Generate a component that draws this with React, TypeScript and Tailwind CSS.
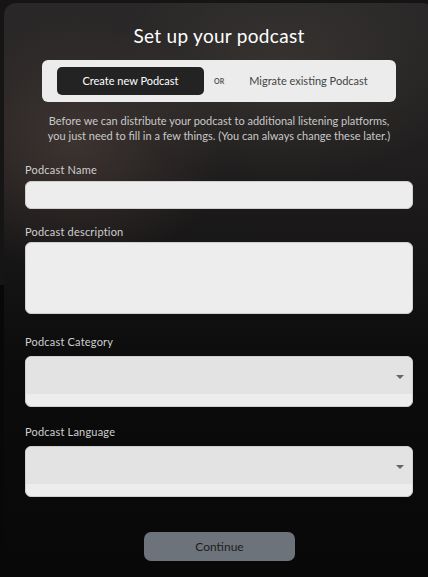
import React from "react";

const font = { fontFamily: "Lato, 'Noto Sans', sans-serif" };

function Label({ children, className }: { children: React.ReactNode; className?: string }) {
  return <p className={`text-[11px] leading-[14px] text-[#cfcfcf] tracking-[0.2px] ${className ?? ""}`}>{children}</p>;
}

function SelectBox({ className }: { className?: string }) {
  return (
    <div className={`relative h-[51px] rounded-[6px] border border-[#cfcfcf] bg-[#ededed] overflow-hidden ${className ?? ""}`}>
      <div className="h-[37px] bg-[#e3e3e3] flex items-center justify-end pr-[8px]">
        <svg width="8" height="5" viewBox="0 0 8 5" className="mt-[4px]">
          <path d="M0 0h8L4 4z" fill="#666" />
        </svg>
      </div>
    </div>
  );
}

export default function App() {
  return (
    <div
      style={font}
      className="w-[428px] h-[577px] overflow-hidden bg-[linear-gradient(to_bottom,#151515_0,#151515_285px,#080808_285px)]"
    >
      <div className="ml-1 mt-[3px] w-[430px] h-[569px] rounded-[12px] px-[21px] bg-[radial-gradient(ellipse_150px_130px_at_70px_140px,rgba(125,100,90,0.3),transparent),radial-gradient(ellipse_180px_110px_at_280px_70px,rgba(115,108,95,0.22),transparent),linear-gradient(to_bottom,#2a2828_0,#1e1c1c_180px,#0c0c0c_360px,#080808_100%)]">
        <h1 className="pt-[21px] text-center text-[19px] leading-[24px] text-white tracking-[0.3px]">
          Set up your podcast
        </h1>
        <div className="mx-[17px] mt-[12px] h-[42px] rounded-[6px] bg-[#ececec] flex items-center px-[15px]">
          <div className="w-[147px] h-[28px] rounded-[5px] bg-[#232323] flex items-center justify-center text-[11px] text-white">
            Create new Podcast
          </div>
          <span className="ml-[10px] text-[7px] text-[#555] font-bold">OR</span>
          <span className="ml-[25px] text-[11px] text-[#444]">Migrate existing Podcast</span>
        </div>
        <p className="mt-[11px] text-center text-[11px] leading-[15px] text-[#c9c9c9]">
          Before we can distribute your podcast to additional listening platforms,
          <br />
          you just need to fill in a few things. (You can always change these later.)
        </p>

        <Label className="mt-[20px]">Podcast Name</Label>
        <div className="mt-[4px] h-[28px] rounded-[6px] border border-[#cfcfcf] bg-[#ededed]" />

        <Label className="mt-[16px]">Podcast description</Label>
        <div className="mt-[3px] h-[72px] rounded-[6px] border border-[#cfcfcf] bg-[#ededed]" />

        <Label className="mt-[21px]">Podcast Category</Label>
        <SelectBox className="mt-[7px]" />

        <Label className="mt-[18px]">Podcast Language</Label>
        <SelectBox className="mt-[7px]" />

        <div className="mt-[35px] flex justify-center">
          <button className="ml-[1px] w-[151px] h-[29px] rounded-[7px] bg-[#6c737a] text-[12px] text-[#1e1e1e]">
            Continue
          </button>
        </div>
      </div>
    </div>
  );
}
